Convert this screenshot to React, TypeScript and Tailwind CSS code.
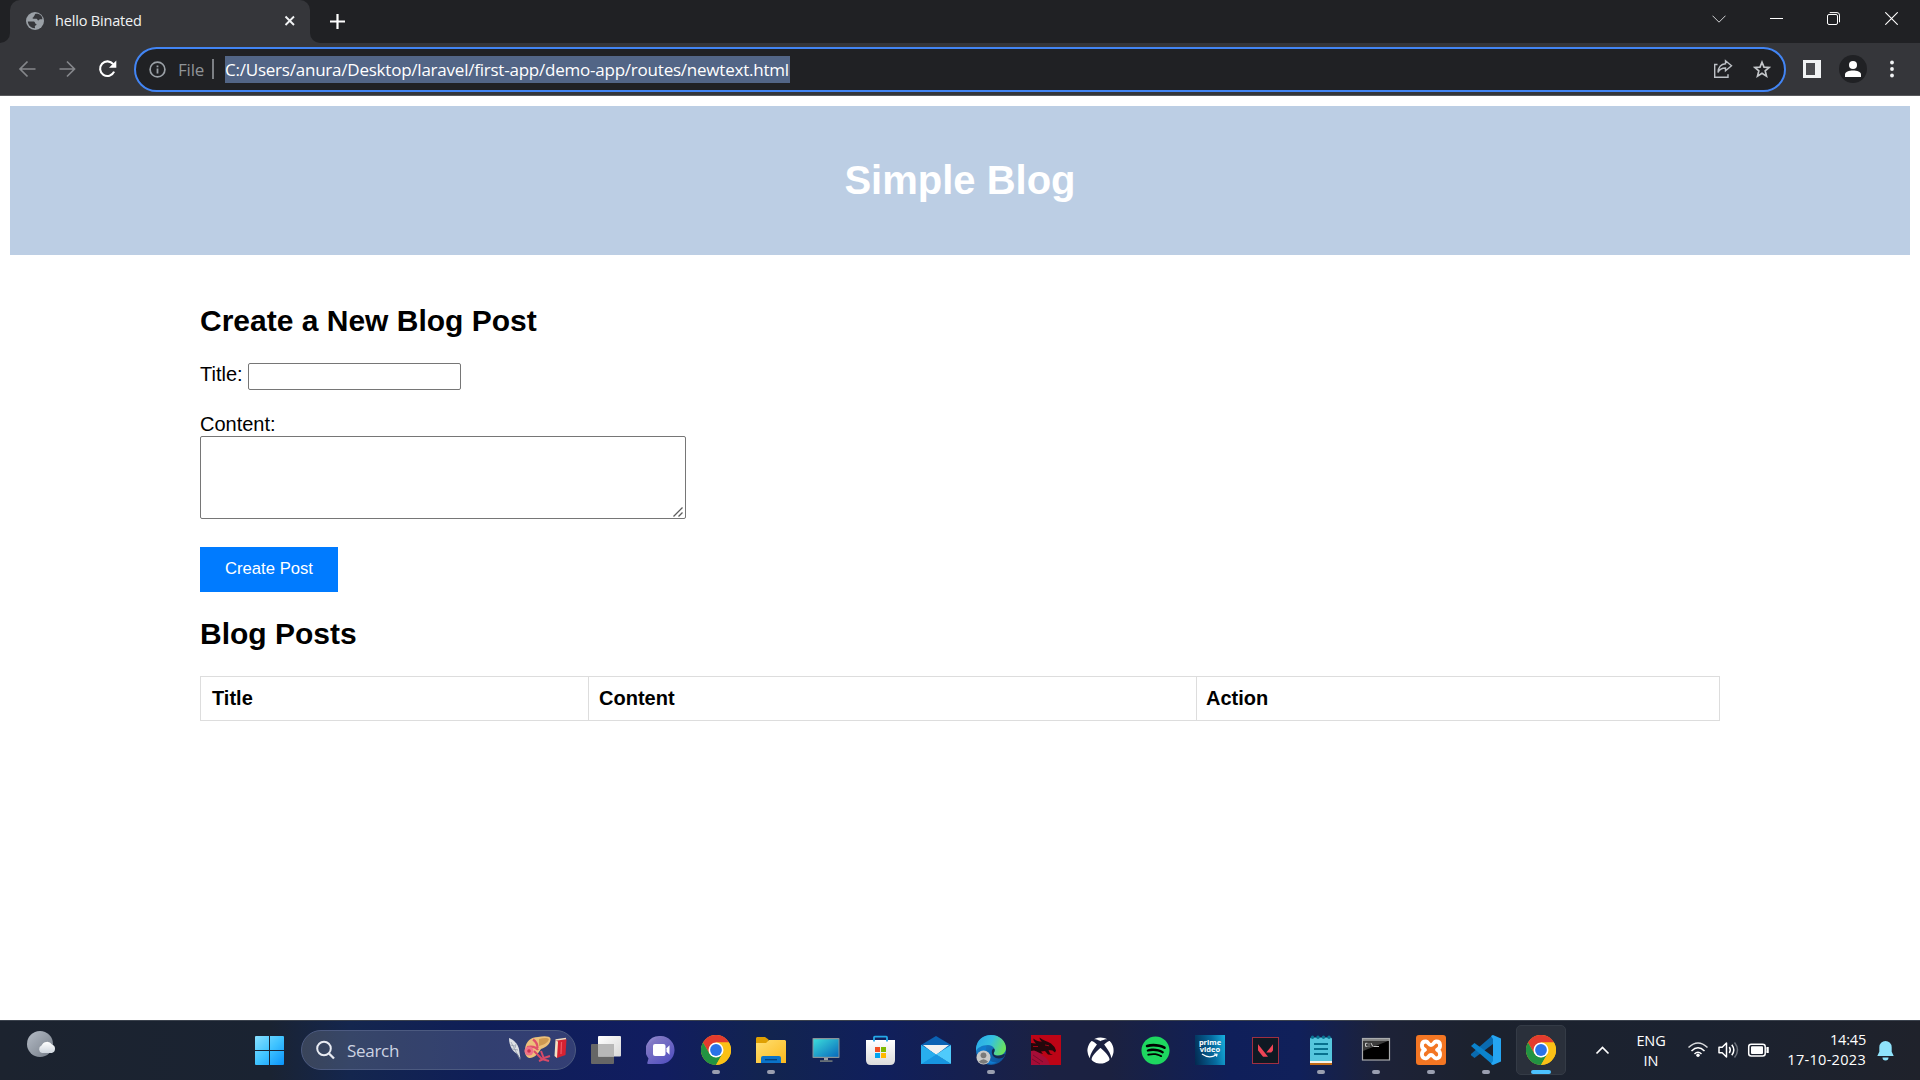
import React from "react";
import { FaXbox, FaSpotify } from "react-icons/fa";
import { SiValorant } from "react-icons/si";

const ui = "font-['Open_Sans','Noto_Sans',sans-serif]";

function TabStrip() {
  return (
    <div className="flex h-[43px] bg-[#202124]">
      <div className="flex w-[10px] items-end bg-[#35363a]">
        <div className="h-full w-full rounded-br-[10px] bg-[#202124]" />
      </div>
      <div className="flex bg-[#202124]">
        <div className="flex w-[300px] items-center rounded-t-[10px] bg-[#35363a] pl-4">
          <svg width="18" height="18" viewBox="0 0 18 18" className="mb-px">
            <circle cx="9" cy="9" r="9" fill="#9aa0a6" />
            <path
              d="M9.500 1.800C8.700 2.400 8.900 3.400 8.100 4 7.400 4.500 7.800 5.400 6.900 5.500 6.300 5.600 6.500 6.800 7.300 6.800h3.200c1 0 .7 1.600 1.600 1.600 1 0 1-1.200 2-1.200h2.200c.5-3-2.700-6-6.800-5.400zM1.800 9.500C2 13.300 5.200 16.300 9 16.200c.3-.8-.6-1.500 0-2.200.5-.6 1.500-.4 1.500-1.400 0-.9-1.500-.7-1.500-1.600 0-1.100-1-1.500-2-1.500z"
              fill="#35363a"
            />
          </svg>
          <span className={`${ui} ml-[11px] w-[220px] pb-[2px] text-[14.500px] leading-5 tracking-[-0.170px] text-[#f1f3f4]`}>
            hello Binated
          </span>
          <svg width="30" height="12" viewBox="0 0 30 12" className="mb-px">
            <path d="M10.500 1.500l8.500 8.500M19 1.500L10.500 10" stroke="#f1f3f4" strokeWidth="1.900" />
          </svg>
        </div>
      </div>
      <div className="flex w-[54px] bg-[#35363a]">
        <div className="flex w-full items-center justify-center rounded-bl-[10px] bg-[#202124]">
          <svg width="15" height="15" viewBox="0 0 15 15" className="mb-px ml-px">
            <path d="M7.500 0v15M0 7.500h15" stroke="#fff" strokeWidth="2.200" />
          </svg>
        </div>
      </div>
      <div className="flex flex-1 justify-end">
        <div className="flex w-[58px] items-center pb-[6px]">
          <svg width="14" height="8" viewBox="0 0 14 8" className="ml-[21px]">
            <path d="M.5.7L7 7.200 13.500.7" fill="none" stroke="#d0d2d5" />
          </svg>
        </div>
        <div className="flex w-[57px] items-center justify-center pr-[2px] pb-[6px]">
          <div className="h-px w-[13px] bg-white" />
        </div>
        <div className="flex w-[57px] items-center justify-center pr-[2px] pb-[6px]">
          <svg width="13" height="13" viewBox="0 0 13 13" fill="none" stroke="#fff">
            <rect x=".5" y="2.500" width="10" height="10" rx="1.500" />
            <path d="M2.700.6H10a2.500 2.500 0 0 1 2.500 2.500v7.200" />
          </svg>
        </div>
        <div className="flex w-[57px] items-center justify-center pb-[6px]">
          <svg width="13" height="13" viewBox="0 0 13 13">
            <path d="M.3.3l12.400 12.400M12.700.3L.3 12.700" stroke="#fff" strokeWidth="1.100" />
          </svg>
        </div>
      </div>
    </div>
  );
}

function Toolbar() {
  return (
    <div className="flex h-[53px] items-center border-b border-[#58595c] bg-[#35363a]">
      <svg width="134" height="20" viewBox="0 0 134 20" fill="none" className="shrink-0">
        <path d="M35.500 10h-15M27.500 2.500L20 10l7.500 7.500" stroke="#85878b" strokeWidth="1.700" />
        <path d="M59.500 10h15M67 2.500l7.500 7.500-7.500 7.500" stroke="#85878b" strokeWidth="1.700" />
        <path d="M113.200 5.200A7.300 7.300 0 1 0 114.100 12.600" stroke="#fff" strokeWidth="2.100" />
        <path d="M116.300 1.500v7.300H109z" fill="#fff" />
      </svg>
      <div className="flex h-[45px] w-[1652px] items-center rounded-full border-2 border-[#4285f4] bg-[#202124]">
        <svg width="17" height="17" viewBox="0 0 17 17" className="ml-[13px]">
          <circle cx="8.500" cy="8.500" r="7.400" fill="none" stroke="#9aa0a6" strokeWidth="1.700" />
          <path d="M7.600 7.500h1.800v5H7.600zM7.600 4.400h1.800v1.800H7.600z" fill="#9aa0a6" />
        </svg>
        <span className={`${ui} ml-[12px] w-[34px] text-[17px] leading-[27px] tracking-[-0.2px] text-[#8f9397]`}>File</span>
        <div className="h-5 w-[2px] bg-[#7c7f84]" />
        <span className={`${ui} ml-[11px] flex h-[27px] w-[565px] items-center bg-[#526586] whitespace-nowrap text-[17px] leading-[27px] tracking-[-0.225px] text-white`}>
          C:/Users/anura/Desktop/laravel/first-app/demo-app/routes/newtext.html
        </span>
        <svg width="20" height="20" viewBox="0 0 20 20" className="ml-[923px]" fill="none" stroke="#bdc1c6" strokeWidth="1.400">
          <path d="M4.500 5.500H1.700V18.200H15v-3" />
          <path d="M12.500 1.800l6 5-6 5V9C8.500 9 6.300 10.500 5 13.500 5.300 8.500 8 5.200 12.500 4.800z" />
        </svg>
        <svg width="18" height="18" viewBox="0 0 18 18" className="ml-[20px]">
          <path d="M9 2.200l2 4.900 5.200.4-4 3.400 1.300 5.200L9 13.300l-4.500 2.800 1.300-5.200-4-3.400 5.200-.4z" fill="none" stroke="#c4c7ca" strokeWidth="1.700" />
        </svg>
      </div>
      <div className="ml-[17px] flex h-[18px] w-[18px] bg-[#f1f3f4] p-[3px]">
        <div className="h-3 w-[9px] bg-[#4b4c50]" />
      </div>
      <div className="ml-[18px] flex h-7 w-7 items-center justify-center rounded-full bg-[#202124]">
        <svg width="16" height="16" viewBox="0 0 16 16" fill="#fff">
          <circle cx="8" cy="4" r="4" />
          <path d="M0 16v-2.500C0 10.800 4 9.500 8 9.500s8 1.300 8 4V16z" />
        </svg>
      </div>
      <svg width="4" height="18" viewBox="0 0 4 18" fill="#f1f3f4" className="ml-[23px]">
        <circle cx="2" cy="2.500" r="1.900" />
        <circle cx="2" cy="9" r="1.900" />
        <circle cx="2" cy="15.500" r="1.900" />
      </svg>
    </div>
  );
}

function BlogPage() {
  return (
    <main className="h-[924px] bg-white px-[10px] pt-[10px] font-['Liberation_Sans',Arial,sans-serif] text-black">
      <header className="h-[149px] bg-[#bccee4] pt-[51px] text-center">
        <h1 className="text-[40px] leading-[46px] font-bold text-white">Simple Blog</h1>
      </header>
      <section className="ml-[190px] pt-[49px]">
        <h2 className="text-[30px] leading-[34px] font-bold">Create a New Blog Post</h2>
        <div className="mt-[25px] flex h-[27px]">
          <label className="w-12 text-[20px] leading-[22px]">Title:</label>
          <input className="h-[27px] w-[213px] rounded-[2px] border border-[#767676] bg-white" />
        </div>
        <label className="mt-[22px] block text-[20px] leading-6">Content:</label>
        <div className="relative h-[83px] w-[486px]">
          <textarea className="block h-[83px] w-[486px] resize-none rounded-[2px] border border-[#767676] bg-white" />
          <svg width="10" height="10" viewBox="0 0 10 10" className="absolute right-[3px] bottom-[2px]">
            <path d="M.5 9.500l9-9M5.500 9.500l4-4" stroke="#5c5c5c" strokeWidth="1.300" />
          </svg>
        </div>
        <button className="mt-[28px] block h-[45px] w-[138px] bg-[#007bff] pb-[3px] text-[16.670px] leading-[19px] text-white">
          Create Post
        </button>
        <h2 className="mt-[25px] text-[30px] leading-[34px] font-bold">Blog Posts</h2>
        <div className="mt-[25px] flex h-[45px] w-[1520px] border border-[#dddddd] text-[20px] leading-[43px] font-bold">
          <div className="w-[388px] border-r border-[#dddddd] pl-[11px]">Title</div>
          <div className="w-[608px] border-r border-[#dddddd] pl-[10px]">Content</div>
          <div className="pl-[9px]">Action</div>
        </div>
      </section>
    </main>
  );
}

function ChromeLogo() {
  return (
    <svg width="30" height="30" viewBox="0 0 30 30">
      <circle cx="15" cy="15" r="15" fill="#fbc116" />
      <path d="M15 7.500H28A15 15 0 0 0 2 7.500L8.500 18.750z" fill="#e33b2e" />
      <path d="M2 7.500A15 15 0 0 0 15 30l6.500-11.250L15 22.500 8.500 18.750z" fill="#229342" />
      <path d="M15 7.500H28A15 15 0 0 1 15 30l6.500-11.250z" fill="#fbc116" />
      <circle cx="15" cy="15" r="7.500" fill="#fff" />
      <circle cx="15" cy="15" r="5.900" fill="#2a73e8" />
    </svg>
  );
}

const TaskViewIcon = () => (
  <svg width="30" height="30" viewBox="0 0 30 30">
    <defs>
      <linearGradient id="tv" x1="0" y1="0" x2="1" y2="1">
        <stop offset="0" stopColor="#fff" />
        <stop offset="1" stopColor="#d8d8d8" />
      </linearGradient>
    </defs>
    <rect x="0" y="9" width="23" height="20" rx="1" fill="#666" />
    <rect x="7" y="1" width="23" height="20.500" rx="1" fill="url(#tv)" />
    <path d="M7 9h16v12.500H7z" fill="#b7b7b7" />
  </svg>
);

const ChatIcon = () => (
  <svg width="30" height="30" viewBox="0 0 30 30">
    <defs>
      <linearGradient id="ch" x1="0" y1="0" x2=".8" y2="1">
        <stop offset="0" stopColor="#a4a0e4" />
        <stop offset=".25" stopColor="#8077c4" />
        <stop offset="1" stopColor="#5250c0" />
      </linearGradient>
    </defs>
    <path d="M15 1a14 14 0 1 1-1 28H2.500c-1.200 0-1.500-1-1-2l1-3.500A14 14 0 0 1 15 1z" fill="url(#ch)" />
    <rect x="7" y="9" width="12.500" height="12" rx="2" fill="#fff" />
    <path d="M20.500 13.300l3-3v9.400l-3-3z" fill="#fff" />
  </svg>
);

const FolderIcon = () => (
  <svg width="30" height="30" viewBox="0 0 30 30">
    <defs>
      <linearGradient id="fo" x1="0" y1="0" x2="1" y2="1">
        <stop offset="0" stopColor="#ffdf72" />
        <stop offset="1" stopColor="#fcb91c" />
      </linearGradient>
    </defs>
    <path d="M0 3.500C0 2.500.8 2 1.500 2H9l3.500 2.500V10H0z" fill="#dfa003" />
    <path d="M0 8h10l3-3h16l1 1v22H0z" fill="url(#fo)" />
    <path d="M5 28v-5q0-2 2-2h16q2 0 2 2v5z" fill="#0a73c9" />
    <path d="M9 24.700h12" stroke="#053f79" strokeWidth="1.300" />
  </svg>
);

const MonitorIcon = () => (
  <svg width="30" height="30" viewBox="0 0 30 30">
    <defs>
      <linearGradient id="mo" x1="0" y1="0" x2="1" y2="1">
        <stop offset="0" stopColor="#3bdcda" />
        <stop offset="1" stopColor="#0869bd" />
      </linearGradient>
    </defs>
    <rect x="1.500" y="3" width="27" height="20" rx=".8" fill="#8a9298" />
    <rect x="2.500" y="4.200" width="25" height="17.600" fill="url(#mo)" />
    <path d="M13 23h4v2.500h-4z" fill="#9aa0a4" />
    <path d="M9 25.200h12.500v1.800H9z" fill="#666f76" />
  </svg>
);

const StoreIcon = () => (
  <svg width="30" height="30" viewBox="0 0 30 30">
    <defs>
      <linearGradient id="st" x1="0" y1="0" x2="0" y2="1">
        <stop offset="0" stopColor="#fff" />
        <stop offset="1" stopColor="#dcdcdc" />
      </linearGradient>
    </defs>
    <path d="M0 5h29v20q0 5-5 5H5q-5 0-5-5z" fill="url(#st)" />
    <path d="M8 6.500V2.500q0-.8.800-.8h11.400q.8 0 .8.800v4" fill="none" stroke="#25a9e8" strokeWidth="1.800" />
    <path d="M9 12h5v5H9z" fill="#f25022" />
    <path d="M15 12h5v5h-5z" fill="#7fba00" />
    <path d="M9 18h5v5H9z" fill="#00a4ef" />
    <path d="M15 18h5v5h-5z" fill="#ffb900" />
  </svg>
);

const MailIcon = () => (
  <svg width="30" height="30" viewBox="0 0 30 30">
    <path d="M0 10L15 1l15 9-2 6H2z" fill="#0b62b4" />
    <path d="M2 10h26L15 20z" fill="#f1f1f1" />
    <path d="M0 10l30 19H0z" fill="#29b3f0" />
    <path d="M30 10v19L15 19.500z" fill="#4fcbfb" />
    <path d="M0 29l15-9.500L30 29z" fill="#1795e0" />
    <path d="M0 10v19l15-9.500z" fill="#28aeee" />
  </svg>
);

const EdgeIcon = () => (
  <svg width="30" height="30" viewBox="0 0 30 30">
    <defs>
      <linearGradient id="ed1" x1="0" y1=".2" x2="1" y2=".5">
        <stop offset="0" stopColor="#2aa9e8" />
        <stop offset=".5" stopColor="#35c1e0" />
        <stop offset="1" stopColor="#6be35c" />
      </linearGradient>
      <linearGradient id="ed2" x1="0" y1="0" x2="1" y2="1">
        <stop offset="0" stopColor="#1a8ddc" />
        <stop offset="1" stopColor="#0c4a92" />
      </linearGradient>
    </defs>
    <circle cx="15" cy="15" r="15" fill="url(#ed2)" />
    <path d="M0 13C1 5 7 0 15 0c9 0 15 6.500 15 13 0 5-4 7.500-8 7.500-3.500 0-5-1.300-4-3 2-3.500-1-7.500-6-7.500C6 10 1 13 0 16z" fill="url(#ed1)" />
    <path d="M10 14c-2 8 4 14 11 13.500-8 4-19-2-17-11 .6-3 3-5 6-5.500z" fill="#0f7bd0" />
    <path d="M18 17.500c-1 2 1 3.200 4 3.200 2.500 0 4.500-.7 5.800-1.700l1.500.5-2 3c-6 2.500-11 0-11.500-5 0-2 .5-3.500 2-4 1.500 1 .8 2.500.2 4z" fill="#16294f" />
    <circle cx="7.500" cy="22.500" r="7" fill="#c9c9c9" />
    <circle cx="7.500" cy="20.300" r="2.900" fill="#7a7a7a" />
    <path d="M2.800 26.800q4.700-5 9.400 0-4.700 4-9.400 0z" fill="#7a7a7a" />
  </svg>
);

const DragonIcon = () => (
  <svg width="30" height="30" viewBox="0 0 30 30">
    <path d="M0 0h30v30H0z" fill="#bd0416" />
    <path d="M0 14q8 0 11 6 6 3 8 10H0z" fill="#a50d37" />
    <path d="M0 8l5 .5C3 6.500 2 5 2.500 3.500 5 6 8 6.500 11 6.500 9.500 5.500 8.500 4 8.500 2.500c3 3 8 3.500 11.500 6l3.500 3.500 1.500 3.500-1 2-2.500-2-4-.5 1.500 3.500 3 1.500-5-.5-3-3.500-4 .5 2 2.500c-4-.5-6-3-9-3.500L0 16z" fill="#24070b" />
    <path d="M2 11.500h5M14 10l4 .8" stroke="#bd0416" strokeWidth=".8" />
    <path d="M2 20l10 7M1 24l8 5" stroke="#780a2b" strokeWidth="1" />
  </svg>
);

const PrimeIcon = () => (
  <div className="-ml-px flex h-[30px] w-[30px] flex-col items-center overflow-hidden bg-[linear-gradient(80deg,#03284f,#066b9f_60%,#17b0df)] pt-[4px] font-['Open_Sans',sans-serif] text-[7.500px] leading-[7px] font-bold text-white">
    <span>prime</span>
    <span>video</span>
    <svg width="18" height="6" viewBox="0 0 18 6">
      <path d="M1 1q7 5 14 1M13 1l3 .2-.5 2.500" fill="none" stroke="#fff" strokeWidth="1.200" />
    </svg>
  </div>
);

const ValorantIcon = () => (
  <div className="flex h-[27px] w-[27px] items-center justify-center border border-[#a02f42] bg-[#0f1923]">
    <SiValorant size={15} color="#f04456" />
  </div>
);

const NotepadIcon = () => (
  <svg width="30" height="30" viewBox="0 0 30 30">
    <path d="M4 26h22v4H4z" fill="#c06a16" />
    <path d="M4 25h22v3H4z" fill="#f5f2ea" />
    <path d="M4 4q0-1.500 1.500-1.500h19Q26 2.500 26 4v22H4z" fill="#55c6dd" />
    <path d="M8 9h14M8 14h14M8 19h14" stroke="#08718e" strokeWidth="1.800" />
    <g fill="#0b7593">
      <circle cx="6.500" cy="2.200" r="1.700" />
      <circle cx="12" cy="2.200" r="1.700" />
      <circle cx="17.500" cy="2.200" r="1.700" />
      <circle cx="23" cy="2.200" r="1.700" />
    </g>
  </svg>
);

const TerminalIcon = () => (
  <svg width="30" height="30" viewBox="0 0 30 30">
    <rect x="1.500" y="3.500" width="27" height="21.500" fill="#000" stroke="#a9abad" strokeWidth="1.200" />
    <path d="M2 5h26" stroke="#d9dadb" strokeWidth="1.200" />
    <path d="M2 6h25L2 16z" fill="#3c3c3c" />
    <path d="M6.500 8.300h-2v3h2M8 8.500v1M8 10.600v1M10 8l1.800 3.500M12.500 11.500H18" stroke="#ddd" strokeWidth=".9" fill="none" />
  </svg>
);

const XamppIcon = () => (
  <div className="flex h-[30px] w-[30px] items-center justify-center rounded-[3px] bg-[#f37623]">
    <svg width="26" height="24" viewBox="0 0 26 24" fill="none" stroke="#fff" strokeWidth="3.800" strokeLinejoin="round">
      <path d="M7 11.700C2.500 10 3 3.200 8 3.500c2.500.4 2.500 3.500 5 3.500s2.500-3.100 5-3.500c5-.3 5.500 6.500 1 8.200 4.500 2 4 9 -1 8.600-2.500-.3-2.500-3.300-5-3.300s-2.500 3-5 3.300c-5 .4-5.500-6.600-1-8.600z" />
    </svg>
  </div>
);

const VscodeIcon = () => (
  <svg width="30" height="30" viewBox="0 0 30 30">
    <path d="M22 0v9L3.500 23 0 20.200V19z" fill="#0a6bb0" />
    <path d="M0 11l3.500-3L22 21.500V30L0 11z" fill="#0b83cc" />
    <path d="M22 0l8 3.500v23L22 30l-2-1 2-3V4l-2-3z" fill="#25a5f2" />
  </svg>
);

const XboxIcon = () => (
  <div className="flex h-[30px] w-[30px] items-center justify-center">
    <FaXbox size={27} color="#fff" />
  </div>
);

const SpotifyIcon = () => (
  <div className="flex h-[29px] w-[29px] items-center justify-center rounded-full bg-[radial-gradient(#000_60%,transparent_61%)]">
    <FaSpotify size={29} color="#1ed760" />
  </div>
);

type Run = "none" | "open" | "active";

const apps: { Icon: () => React.ReactElement; run: Run }[] = [
  { Icon: TaskViewIcon, run: "none" },
  { Icon: ChatIcon, run: "none" },
  { Icon: ChromeLogo, run: "open" },
  { Icon: FolderIcon, run: "open" },
  { Icon: MonitorIcon, run: "none" },
  { Icon: StoreIcon, run: "none" },
  { Icon: MailIcon, run: "none" },
  { Icon: EdgeIcon, run: "open" },
  { Icon: DragonIcon, run: "none" },
  { Icon: XboxIcon, run: "none" },
  { Icon: SpotifyIcon, run: "none" },
  { Icon: PrimeIcon, run: "none" },
  { Icon: ValorantIcon, run: "none" },
  { Icon: NotepadIcon, run: "open" },
  { Icon: TerminalIcon, run: "open" },
  { Icon: XamppIcon, run: "open" },
  { Icon: VscodeIcon, run: "open" },
  { Icon: ChromeLogo, run: "active" },
];

function AppCell({ Icon, run }: { Icon: () => React.ReactElement; run: Run }) {
  return (
    <div
      className={
        run === "active"
          ? "mx-[2.500px] flex h-[50px] w-[50px] flex-col items-center rounded-[5px] border border-[#343b46] bg-[#2a303b] pt-[9px]"
          : "flex h-[50px] w-[55px] flex-col items-center pt-[10px]"
      }
    >
      <div className="flex h-[30px] items-center">
        <Icon />
      </div>
      {run === "open" && <div className="mt-[5px] h-1 w-2 rounded-full bg-[#9a9fb0]" />}
      {run === "active" && <div className="mt-[5px] h-1 w-5 rounded-full bg-[#4cc2ff]" />}
    </div>
  );
}

function SearchArt() {
  return (
    <svg width="60" height="28" viewBox="0 0 60 28" fill="none">
      <path d="M2 2c5 2 9 6 10 11l1.500 10-3-5C6 16 2 10 2 2z" fill="#dde0e4" />
      <path d="M4 6l9 17.500M3 9l5 1M5 13l6 1M9 8l-1 4" stroke="#8b93a3" strokeWidth=".7" />
      <path d="M18 13C19 5 24 1 31 1c6-1.500 12-1 12.500 1.500C44 7 40 11 34 13c-3 5-7 9-11 9-3 0-6-4-5-9z" fill="#ecc07a" />
      <path d="M32 3c4-1.500 9-1.500 10 0-1 4-6 6-10 7z" fill="#cf9a52" />
      <path d="M26 3.500c3 2 4.500 5 4.500 8.500M20 11c5-1 9 0 11 3" stroke="#e0506b" strokeWidth="2.200" />
      <path d="M27 15l8 8 7 2M34 15l3 8-5 2M37 22l6-2" stroke="#d94a68" strokeWidth="2" />
      <circle cx="22" cy="15" r="4.500" fill="#ef7388" />
      <circle cx="22" cy="15" r="1.800" fill="#c8344f" />
      <path d="M49 4.500L59.500 3l-1 16-8.500 3-2-2z" fill="#d52232" />
      <path d="M48.500 4.500l2.500 1L50 22l-2.500-2z" fill="#f1e2c4" />
      <path d="M48.500 4l10.500-1.500" stroke="#f3ddc0" strokeWidth="1.300" />
      <path d="M54.500 6l-.5 12" stroke="#ef5964" strokeWidth="1.200" />
    </svg>
  );
}

function Taskbar() {
  return (
    <footer
      className={`${ui} flex h-[60px] items-start border-t border-[#3b424d] bg-[linear-gradient(90deg,#1c232f_0px,#1a2332_270px,#14264e_350px,#0f1e58_480px,#111d60_660px,#12244f_770px,#101f5c_880px,#1b2142_1050px,#1b2140_1110px,#0f1f5a_1230px,#10205a_1300px,#1d2238_1380px,#1c222e_1480px,#1b2230_1700px,#1f222b_1920px)] pt-1 text-white`}
    >
      <svg width="241" height="40" viewBox="0 0 241 40" className="shrink-0">
        <defs>
          <linearGradient id="moon" x1="0" y1="0" x2="1" y2="1">
            <stop offset="0" stopColor="#b5bcc6" />
            <stop offset="1" stopColor="#747c87" />
          </linearGradient>
          <linearGradient id="cloud" x1="0" y1="0" x2="0" y2="1">
            <stop offset="0" stopColor="#fff" />
            <stop offset="1" stopColor="#cfd6de" />
          </linearGradient>
        </defs>
        <circle cx="40" cy="19" r="13" fill="url(#moon)" />
        <path d="M42 28a4 4 0 0 1-.5-7.500 6 6 0 0 1 10.500-1 4.500 4.500 0 0 1 0 8.500z" fill="url(#cloud)" />
      </svg>
      <svg width="60" height="50" viewBox="0 0 60 50" className="shrink-0">
        <defs>
          <linearGradient id="win" gradientUnits="userSpaceOnUse" x1="14" y1="11" x2="43" y2="40">
            <stop offset="0" stopColor="#88e0ff" />
            <stop offset=".5" stopColor="#3fc3ff" />
            <stop offset="1" stopColor="#0a93fa" />
          </linearGradient>
        </defs>
        <path d="M14 12q0-1 1-1h13v14H14zM29 11h13q1 0 1 1v13H29zM14 26h14v14H15q-1 0-1-1zM29 26h14v13q0 1-1 1H29z" fill="url(#win)" />
      </svg>
      <div className="mt-[5px] flex h-10 w-[275px] shrink-0 items-center rounded-full border border-[#4c5a80] bg-white/15 pl-[14px]">
        <svg width="19" height="20" viewBox="0 0 19 20" fill="none" stroke="#e8ebf2" strokeWidth="2">
          <circle cx="8" cy="8.500" r="6.800" />
          <path d="M13 13.500l5 5" strokeWidth="2.300" />
        </svg>
        <span className="ml-[12px] w-[160px] pt-px text-[17px] tracking-[-0.3px] text-[#cdd3e2]">Search</span>
        <SearchArt />
      </div>
      <div className="ml-[2px] flex">
        {apps.map((a, i) => (
          <AppCell key={i} {...a} />
        ))}
      </div>
      <div className="flex h-[50px] w-[68px] items-center justify-center">
        <svg width="15" height="9" viewBox="0 0 15 9" className="ml-px">
          <path d="M1.500 7.500l6-6 6 6" fill="none" stroke="#fff" strokeWidth="1.700" />
        </svg>
      </div>
      <div className="w-[30px] pt-[6px] text-center text-[14.500px] leading-5 tracking-[-0.1px]">
        <div>ENG</div>
        <div>IN</div>
      </div>
      <svg width="88" height="24" viewBox="0 0 88 24" className="mt-[13px] ml-[21px]" fill="none" stroke="#fff" strokeWidth="1.500">
        <path d="M1.500 9.500q9.500-9 19 0" stroke="#d7d9dc" />
        <path d="M4.500 13q6.500-6.500 13 0M7.500 16q3.500-3.500 7 0" />
        <circle cx="11" cy="17.300" r="1.700" fill="#fff" stroke="none" />
        <path d="M32 9.300h3.200L39.500 5v14l-4.300-4.200H32z" strokeLinejoin="round" />
        <path d="M42.300 9q2 3 0 6M44.800 6.800q4 5.200 0 10.400" />
        <path d="M47.500 4.500q6 7.500 0 15" stroke="#6b7079" />
        <rect x="61.700" y="6.200" width="16.500" height="11.800" rx="2.500" />
        <rect x="64" y="8.300" width="12" height="7.600" rx="1" fill="#fff" stroke="none" />
        <path d="M79.500 9.800h1.500v4.400h-1.500" fill="#fff" />
      </svg>
      <div className="flex w-[91px] flex-col items-end pt-[5px] text-[14.500px] leading-5 whitespace-nowrap">
        <div className="tracking-[-0.2px]">14:45</div>
        <div className="tracking-[0.3px]">17-10-2023</div>
      </div>
      <svg width="17" height="20" viewBox="0 0 17 20" className="mt-[16px] ml-[11px]" fill="#8fe3fb">
        <path d="M8.500 0a6.200 6.200 0 0 1 6.200 6.200v4.500l2 4.300H.3l2-4.300V6.200A6.200 6.200 0 0 1 8.500 0zM5.500 16.500h6a3 3 0 0 1-6 0z" />
      </svg>
    </footer>
  );
}

export default function App() {
  return (
    <div className="h-[1080px] w-[1920px] overflow-hidden bg-white">
      <TabStrip />
      <Toolbar />
      <BlogPage />
      <Taskbar />
    </div>
  );
}
